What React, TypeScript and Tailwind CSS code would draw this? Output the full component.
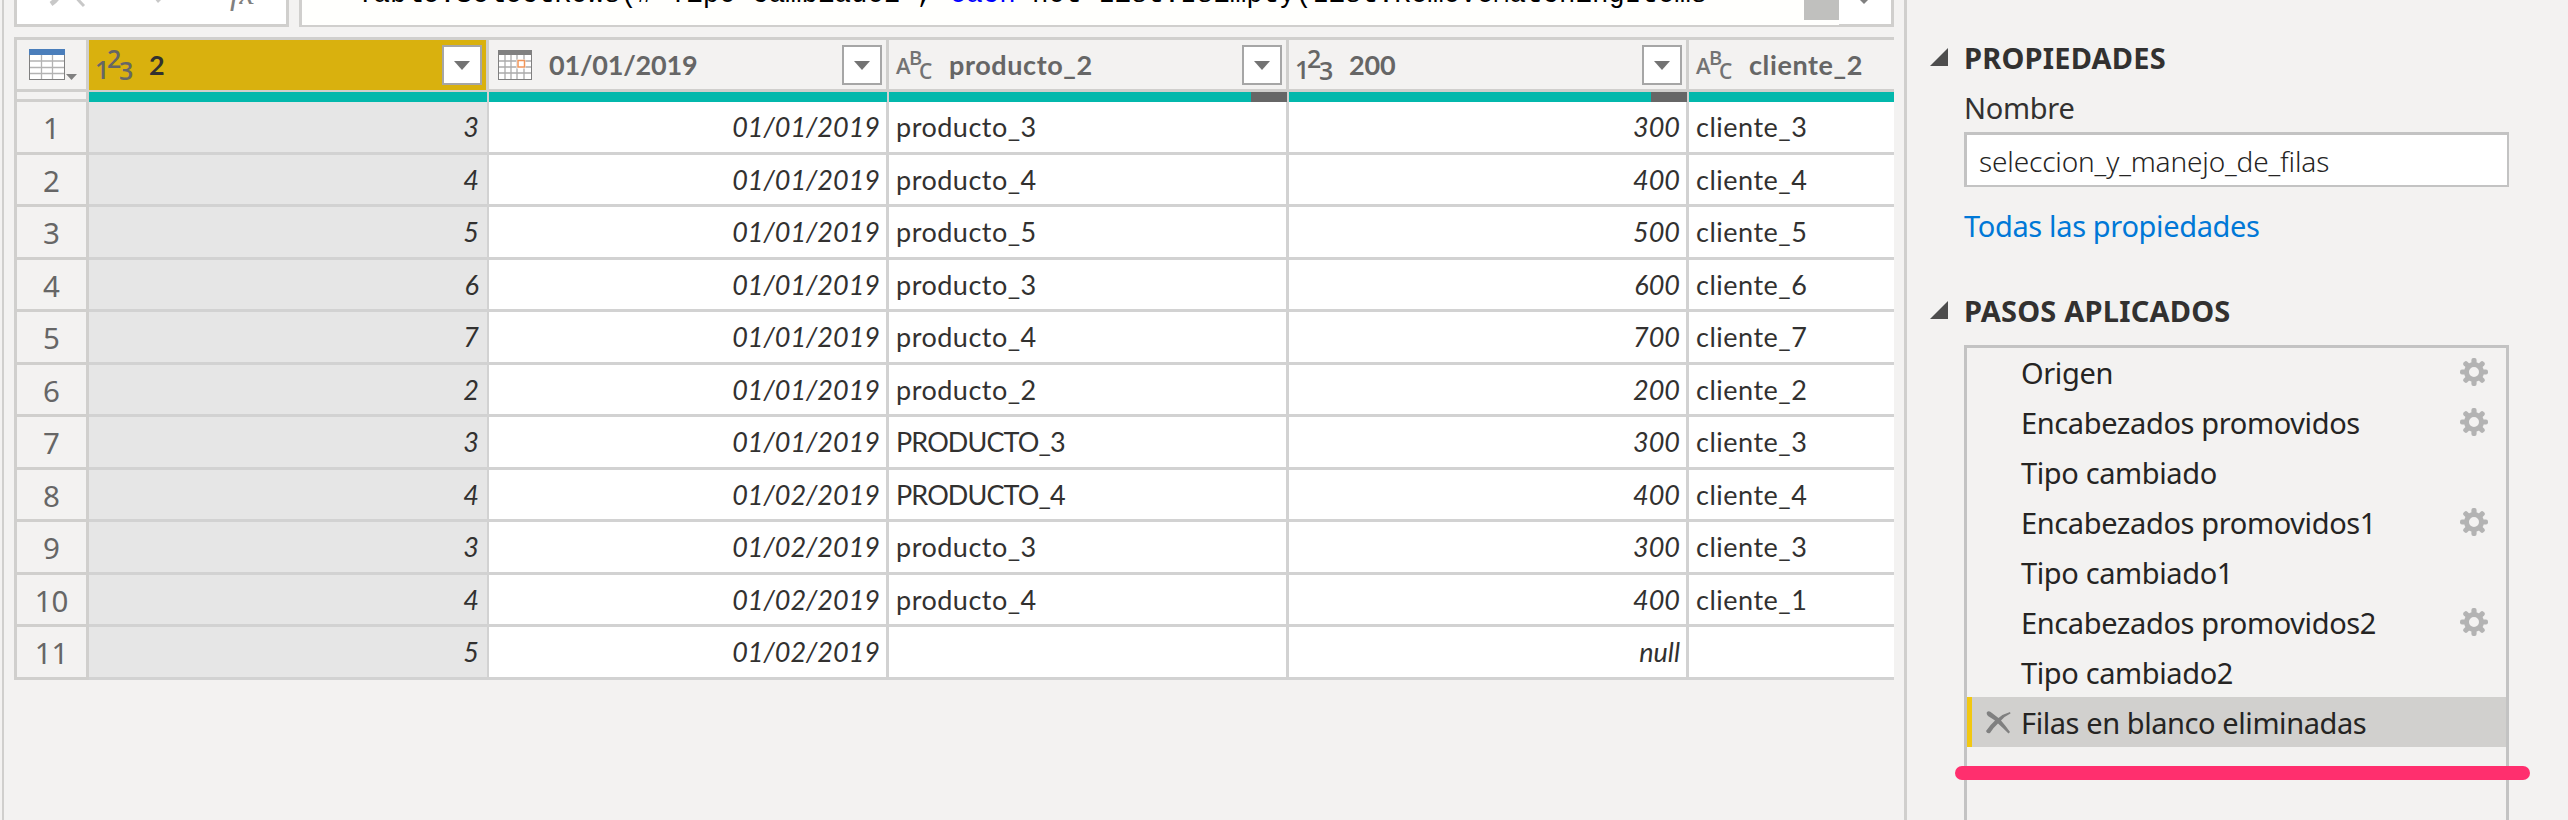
import React from "react";

type Column = {
  id: string;
  kind: "number" | "date" | "text";
  title: string;
  selected?: boolean;
  hasBlanks?: boolean;
  last?: boolean;
};

const columns: Column[] = [
  { id: "a", kind: "number", title: "2", selected: true },
  { id: "b", kind: "date", title: "01/01/2019" },
  { id: "c", kind: "text", title: "producto_2", hasBlanks: true },
  { id: "d", kind: "number", title: "200", hasBlanks: true },
  { id: "e", kind: "text", title: "cliente_2", last: true },
];

const rows: string[][] = [
  ["3", "01/01/2019", "producto_3", "300", "cliente_3"],
  ["4", "01/01/2019", "producto_4", "400", "cliente_4"],
  ["5", "01/01/2019", "producto_5", "500", "cliente_5"],
  ["6", "01/01/2019", "producto_3", "600", "cliente_6"],
  ["7", "01/01/2019", "producto_4", "700", "cliente_7"],
  ["2", "01/01/2019", "producto_2", "200", "cliente_2"],
  ["3", "01/01/2019", "PRODUCTO_3", "300", "cliente_3"],
  ["4", "01/02/2019", "PRODUCTO_4", "400", "cliente_4"],
  ["3", "01/02/2019", "producto_3", "300", "cliente_3"],
  ["4", "01/02/2019", "producto_4", "400", "cliente_1"],
  ["5", "01/02/2019", "", "null", ""],
];

const steps = [
  { name: "Origen", gear: true },
  { name: "Encabezados promovidos", gear: true },
  { name: "Tipo cambiado", gear: false },
  { name: "Encabezados promovidos1", gear: true },
  { name: "Tipo cambiado1", gear: false },
  { name: "Encabezados promovidos2", gear: true },
  { name: "Tipo cambiado2", gear: false },
];

const ui = "font-['Noto_Sans','Open_Sans',sans-serif]";

function cellTracking(kind: Column["kind"], value: string) {
  if (kind !== "text") return "tracking-normal";
  return value.startsWith("P") ? "tracking-[-0.9px]" : "tracking-[0.5px]";
}

function TypeIcon({ kind }: { kind: Column["kind"] }) {
  if (kind === "date") {
    return (
      <svg width="34" height="30" viewBox="0 0 34 30" className="shrink-0">
        <rect x="0.5" y="0.5" width="33" height="29" fill="#fff" stroke="#808080" />
        <path d="M1 11H33M1 17H33M1 23H33M7 5V29M13 5V29M19 5V29M26 5V29" stroke="#ababab" strokeWidth="1.3" />
        <rect width="34" height="5" fill="#808080" />
        <rect x="18.5" y="9.5" width="9" height="9" fill="#fff" />
        <rect x="20" y="10.5" width="6.5" height="6.5" fill="#fff" stroke="#f0955a" strokeWidth="1.5" />
      </svg>
    );
  }
  return kind === "number" ? (
    <svg width="37" height="34" viewBox="0 0 37 34" className="shrink-0 overflow-visible font-['Open_Sans',sans-serif] font-semibold" fill="#666">
      <text x="-1" y="31" fontSize="25">1</text>
      <text x="11" y="20" fontSize="25">2</text>
      <text x="23" y="32" fontSize="25">3</text>
    </svg>
  ) : (
    <svg width="37" height="34" viewBox="0 0 37 34" className="shrink-0 overflow-visible font-['Open_Sans',sans-serif] font-semibold" fill="#737373">
      <text x="0" y="26" fontSize="22">A</text>
      <text x="13" y="17" fontSize="20">B</text>
      <text x="23" y="31" fontSize="21">C</text>
    </svg>
  );
}

function FilterButton() {
  return (
    <div className="flex h-10 w-10 shrink-0 items-center justify-center border-2 border-[#a6a6a6] bg-white">
      <svg width="16" height="9" viewBox="0 0 16 9"><path d="M0 0H16L8 9Z" fill="#737373" /></svg>
    </div>
  );
}

function Gear() {
  return (
    <svg width="28" height="28" viewBox="-14 -14 28 28" className="shrink-0">
      {[0, 45, 90, 135].map((a) => (
        <rect key={a} x="-2.6" y="-14" width="5.2" height="28" rx="2" fill="#b3b3b3" transform={`rotate(${a})`} />
      ))}
      <circle r="7.5" fill="#f3f2f1" stroke="#b3b3b3" strokeWidth="5" />
    </svg>
  );
}

function SectionTitle({ children }: { children: React.ReactNode }) {
  return (
    <div className="flex h-10 items-center">
      <svg width="18" height="18" viewBox="0 0 18 18" className="mr-4 shrink-0"><path d="M18 0V18H0Z" fill="#4d4d4d" /></svg>
      <span className="pt-px text-[29px] font-bold leading-10 tracking-[0.2px] whitespace-nowrap text-[#323130]">{children}</span>
    </div>
  );
}

function FormulaBar() {
  return (
    <div className="ml-[10px] flex h-[27px] overflow-hidden">
      <div className="relative h-[27px] w-[275px] overflow-hidden border-x-3 border-b-3 border-[#d0cfcd] bg-white">
        <svg width="269" height="24" viewBox="0 0 269 24">
          <path d="M34 4C37 2 39 0 41 -3" stroke="#c8c8c8" strokeWidth="5" fill="none" />
          <path d="M59 -3C61 0 64 3 67 6" stroke="#c8c8c8" strokeWidth="3" fill="none" />
          <path d="M137 -2L141 3L146 -2" fill="#c8c8c8" />
        </svg>
        <span className="absolute left-[213px] top-[-27px] font-['Liberation_Serif',serif] text-[34px] italic leading-10 text-[#808080]">fx</span>
      </div>
      <div className="ml-[10px] flex h-[27px] w-[1595px] border-r-3 border-l-3 border-[#d0cfcd] bg-[#fffffd]">
        <div className="h-[27px] w-[1537px] overflow-hidden border-b-2 border-[#d0cfcd]">
          <div className="flex">
            <pre className="-mt-[25px] w-[1502px] overflow-hidden pl-[55px] font-['Liberation_Mono',monospace] text-[27.45px] leading-10 text-black">
              {'Table.SelectRows(#"Tipo cambiado2", '}
              <span className="text-[#0000ff]">each</span>
              {" not List.IsEmpty(List.RemoveMatchingItems"}
            </pre>
            <div className="h-5 w-[35px] bg-[#c0c0be]" />
          </div>
        </div>
        <div className="flex h-[27px] w-[52px] items-start justify-center border-b-3 border-[#d0cfcd] bg-white">
          <svg width="12" height="4" viewBox="0 0 12 4"><path d="M1 0H9L5 4Z" fill="#808080" /></svg>
        </div>
      </div>
    </div>
  );
}

function Grid() {
  return (
    <div className="mt-[10px] ml-[10px] w-[1880px] overflow-hidden border-t-3 border-l-3 border-[#d0cfcd] font-['Lato','Carlito',sans-serif]">
      <div className="flex h-[52px]">
        <div className="flex h-[52px] w-[72px] shrink-0 border-r-3 border-b-3 border-[#d0cfcd] pt-[9px] pl-3">
          <svg width="50" height="32" viewBox="0 0 50 32">
            <rect x="0.5" y="0.5" width="35" height="30" fill="#fff" stroke="#808080" />
            <path d="M1 12H35M1 18.500H35M1 24.500H35M12.500 6V30M23.500 6V30" stroke="#b3b3b3" strokeWidth="1.3" />
            <rect width="36" height="6" fill="#4a7ebb" />
            <path d="M37 25H48L42.500 31Z" fill="#808080" />
          </svg>
        </div>
        {columns.map((c) => (
          <div
            key={c.id}
            className={`flex h-[52px] shrink-0 items-start pt-[5px] ${c.last ? "w-[205px]" : "w-[400px] border-r-3"} ${c.selected ? "border-b-2 bg-[#d9b10e]" : "border-b-3 bg-[#f3f2f1]"} border-[#d0cfcd]`}
          >
            <div className={`flex h-10 w-[45px] shrink-0 items-center ${c.kind === "date" ? "pl-[9px]" : "pl-[7px]"}`}>
              <TypeIcon kind={c.kind} />
            </div>
            <span className={`ml-[15px] grow text-[27px] font-bold leading-10 ${c.kind === "text" ? "tracking-[0.6px]" : "tracking-[-0.2px]"} ${c.selected ? "text-[#323130]" : "text-[#666]"}`}>{c.title}</span>
            {!c.last && <div className="mr-1"><FilterButton /></div>}
          </div>
        ))}
      </div>
      <div className="flex h-[10px]">
        <div className="h-[10px] w-[72px] shrink-0 border-r-3 border-b-3 border-[#d0cfcd]" />
        {columns.map((c) => (
          <div key={c.id} className={`flex h-[10px] shrink-0 border-[#d2d2d2] ${c.last ? "w-[205px]" : "w-[400px] border-r-2"}`}>
            <div className="h-full grow bg-[#03b8ac]" />
            {c.hasBlanks && <div className="h-full w-9 bg-[#666]" />}
          </div>
        ))}
      </div>
      {rows.map((r, i) => (
        <div key={i} className={`flex ${i % 2 === 0 ? "h-[53px]" : "h-[52px]"}`}>
          <div className={`w-[72px] shrink-0 border-r-3 border-b-3 border-[#d0cfcd] text-center text-[29.5px] leading-[52px] text-[#666] ${ui}`}>{i + 1}</div>
          {columns.map((c, j) => (
            <div
              key={c.id}
              className={`shrink-0 border-b-3 border-[#d2d2d2] text-[27px] leading-[50px] text-[#323130] ${cellTracking(c.kind, r[j])} ${c.last ? "w-[205px]" : c.selected ? "w-[400px] border-r-2" : "w-[400px] border-r-3"} ${c.selected ? "bg-[#e6e6e6]" : "bg-white"} ${c.kind === "text" ? "pl-[7px]" : c.selected ? "pr-[8px] text-right italic" : "pr-[6px] text-right italic"}`}
            >
              {r[j]}
            </div>
          ))}
        </div>
      ))}
    </div>
  );
}

function SettingsPanel() {
  return (
    <div className={`flex h-[820px] grow flex-col pt-[37px] pl-[23px] ${ui}`}>
      <SectionTitle>PROPIEDADES</SectionTitle>
      <div className="mt-[11px] ml-[34px] text-[29px] leading-10 tracking-[-0.3px] text-[#323130]">Nombre</div>
      <div className="mt-1 ml-[34px] h-[55px] w-[545px] border-t-3 border-r-2 border-b-2 border-l-3 border-[#c3c3c3] bg-white pl-3 text-[28px] font-light leading-[52px] tracking-[-0.15px] text-[#252423]">
        seleccion_y_manejo_de_filas
      </div>
      <div className="mt-[19px] ml-[34px] text-[29px] leading-10 tracking-[-0.35px] text-[#0078d7]">Todas las propiedades</div>
      <div className="mt-[44px]"><SectionTitle>PASOS APLICADOS</SectionTitle></div>
      <div className="relative mt-[15px] ml-[34px] w-[545px] grow border-x-3 border-t-3 border-[#c3c3c3]">
        <div className="-mt-px">
          {steps.map((s) => (
            <div key={s.name} className="flex h-[50px] items-center justify-between pr-[18px] pl-[54px]">
              <span className="pt-px text-[29px] leading-[50px] tracking-[-0.38px] whitespace-nowrap text-[#252423]">{s.name}</span>
              {s.gear && <Gear />}
            </div>
          ))}
          <div className="flex h-[50px] items-center border-l-5 border-[#f2c811] bg-[#d1d0ce] pl-[14px]">
            <svg width="25" height="23" viewBox="0 0 25 23" className="mr-[10px] shrink-0">
              <path d="M1 1Q3 -1 6 2L12.500 7Q17 3 24 1L24.500 2.500Q19 5 15 9.500Q19 14 24 21L22.500 22.500Q17 17 12 12.500Q7 17 4 22Q1 23 0 20Q4 14 9 9.500L2 5Q0 3 1 1Z" fill="#808080" />
            </svg>
            <span className="pt-px text-[29px] leading-[50px] tracking-[-0.42px] whitespace-nowrap text-[#252423]">Filas en blanco eliminadas</span>
          </div>
        </div>
        <div className="absolute top-[418px] left-[-12px] h-[14px] w-[575px] rounded-full bg-[#ff2f6e]" />
      </div>
    </div>
  );
}

export default function App() {
  return (
    <div className="flex h-[820px] w-[2568px] overflow-hidden bg-[#f3f2f1]">
      <div className="ml-[2px] h-[820px] w-[1905px] shrink-0 overflow-hidden border-r-3 border-l-2 border-[#d0cfcd]">
        <FormulaBar />
        <Grid />
      </div>
      <SettingsPanel />
    </div>
  );
}
